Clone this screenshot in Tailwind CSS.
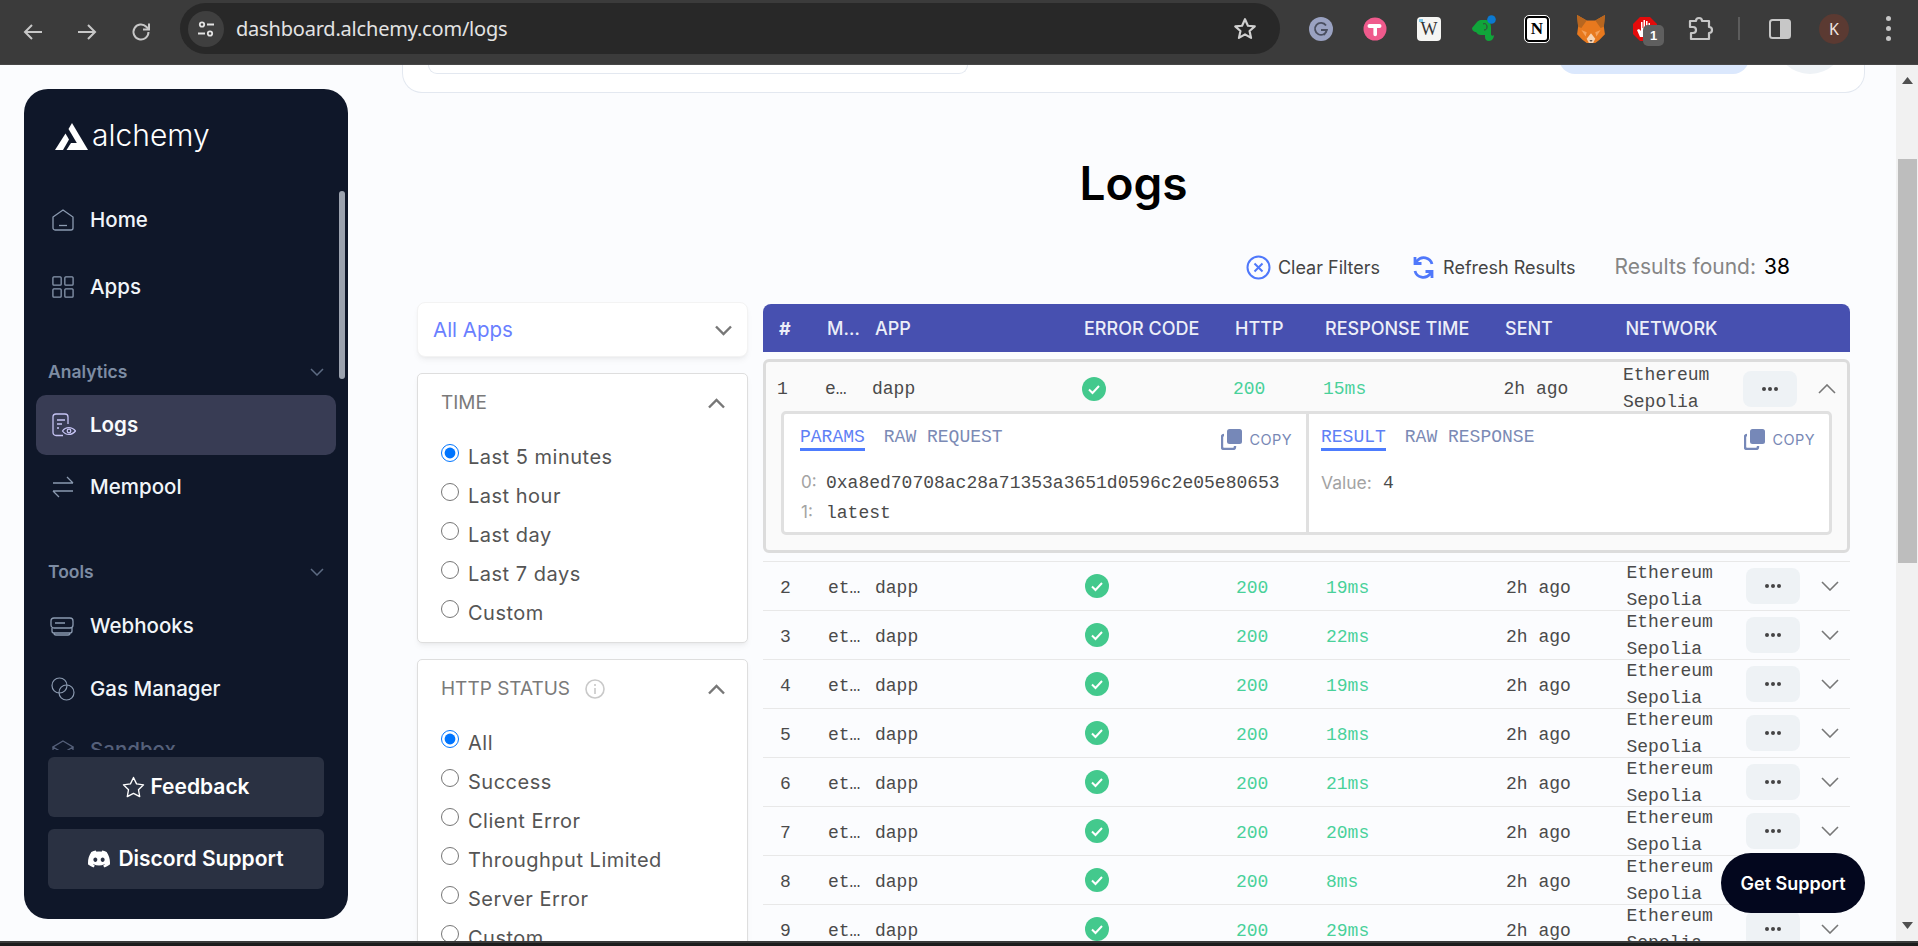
<!DOCTYPE html>
<html lang="en">
<head>
    <meta charset="UTF-8">
    <title>Logs - Alchemy</title>
    <script src="https://cdn.jsdelivr.net/npm/@tailwindcss/browser@4"></script>
</head>
<body class="h-[946px] overflow-hidden bg-[#fbfcfe] font-['Inter',sans-serif]">

    <!-- browser toolbar -->
    <div class="relative h-[65px] flex items-center bg-[#3b3b3b] border-b border-[#474747]">
        <div class="flex items-center w-[180px] pl-[21px] gap-[30px] text-[#c7c7c7]">
            <svg class="w-6 h-6" viewBox="0 0 24 24" fill="none" stroke="currentColor" stroke-width="2"><path d="M21 12H4M11 5l-7 7 7 7"/></svg>
            <svg class="w-6 h-6" viewBox="0 0 24 24" fill="none" stroke="currentColor" stroke-width="2"><path d="M3 12h17M13 5l7 7-7 7"/></svg>
            <svg class="w-6 h-6" viewBox="0 0 24 24" fill="none" stroke="currentColor" stroke-width="2"><path d="M19.5 12a7.5 7.5 0 1 1-2.2-5.3L20 9.5"/><path d="M20 3.5v6h-6" /></svg>
        </div>
        <div class="w-[1100px] h-[51px] -mt-[7px] rounded-full bg-[#282828] flex items-center pl-2 pr-[22px]">
            <div class="w-9 h-9 rounded-full bg-[#3f3f3f] flex items-center justify-center">
                <svg class="w-5 h-5" viewBox="0 0 20 20" fill="none" stroke="#e3e3e3" stroke-width="1.8"><circle cx="6" cy="5.5" r="2.2"/><path d="M11 5.5h7M2 14.5h7"/><circle cx="14" cy="14.5" r="2.2"/></svg>
            </div>
            <span class="ml-3 text-[20px] text-[#e3e3e3] font-['Noto_Sans',sans-serif] tracking-[-0.2px]">dashboard.alchemy.com/logs</span>
            <svg class="ml-auto w-[26px] h-[26px]" viewBox="0 0 24 24" fill="none" stroke="#d0d0d0" stroke-width="2" stroke-linejoin="round"><path d="M12 3l2.7 6 6.3.6-4.8 4.2 1.4 6.4L12 16.9l-5.6 3.3 1.4-6.4L3 9.600l6.300-.6z"/></svg>
        </div>
        <div class="flex items-center h-full -mt-[7px] ml-[29px]">
            <svg class="w-6 h-6" viewBox="0 0 24 24"><circle cx="12" cy="12" r="12" fill="#9aa2c2"/><path d="M17 8.500a6 6 0 1 0 .9 4.500H12M15 18l3-5" fill="none" stroke="#4a4f60" stroke-width="1.800"/></svg>
            <svg class="w-6 h-6 ml-[30px]" viewBox="0 0 24 24"><circle cx="12" cy="12" r="11.500" fill="#ef5a8c"/><path d="M6.500 7h10a1.500 1.500 0 0 1 0 4H14v6.500a1.800 1.800 0 0 1-3.600 0V11H6.500a2 2 0 0 1 0-4z" fill="#fff"/></svg>
            <div class="relative w-6 h-6 ml-[30px] rounded-[4px] bg-[#f5f5f3] flex items-center justify-center font-['Liberation_Serif',serif] text-[18px] leading-none text-[#333]">W<span class="absolute left-[2px] top-[2px] w-[4px] h-[3px] bg-[#7ec8e8]"></span></div>
            <svg class="w-7 h-7 ml-[28px]" viewBox="0 0 28 28"><path d="M3 13l5-6c1-1 2-2 4-2h5c4 0 5 4 5 8v6c0 2 2 2 3 1 0 3-2 6-5 6-3 0-4-2-4-4v-2h-4c-3 0-4-2-5-3H6c-2-1-3-2-3-4z" fill="#10a53a"/><path d="M14 9c2-1 4 0 4 3 0 2-1 3-3 3" stroke="#3b3b3b" stroke-width="1" fill="none"/><circle cx="22.500" cy="4.500" r="4.300" fill="#0b79d0"/></svg>
            <div class="w-6 h-[26px] ml-[28px] rounded-[4px] bg-white border-2 border-black outline-1 outline-white flex items-center justify-center font-['Liberation_Serif',serif] font-bold text-[17px] leading-none text-black">N</div>
            <svg class="w-[30px] h-[30px] ml-[27px]" viewBox="0 0 28 28"><path d="M1 1l9 5h8l9-5-1 11 1 7-5 5-4 3h-8l-4-3-5-5 1-7z" fill="#e8791e"/><path d="M1 1l9 5-5 7-3-1zM27 1l-9 5 5 7 3-1z" fill="#b8661f"/><path d="M5 15l5 2-1 4zM23 15l-5 2 1 4z" fill="#f5a25c"/><path d="M10 23l4-5 4 5-2 4h-4z" fill="#f6d3b3"/><path d="M12.500 24.500h3l-1.500 1.500z" fill="#333"/></svg>
            <div class="relative ml-[25px] w-7 h-7">
                <svg class="w-7 h-7" viewBox="0 0 28 28"><path d="M9 2h10l7 7v10l-7 7H9l-7-7V9z" fill="#e30b0b"/><path d="M9 22l-3-7 2-1 2 2V7h1.500v6h1V5h1.500v8h1V6h1.500v7h1V8h1.500v11l-2 3z" fill="#fff"/></svg>
                <span class="absolute left-[12px] top-[10px] w-[21px] h-[21px] rounded-[5px] bg-[#5f5f5f] text-white text-[13px] font-bold leading-[21px] text-center font-['Liberation_Sans',sans-serif]">1</span>
            </div>
            <svg class="w-[28px] h-[28px] ml-[27px]" viewBox="0 0 28 28" fill="none" stroke="#c7c7c7" stroke-width="2.200" stroke-linejoin="round"><path d="M4 6h6a3 3 0 0 1 6 0h7v6a3 3 0 0 1 0 6v6H5v-6h2a3 3 0 0 0 0-6H4z"/></svg>
            <div class="w-[2px] h-[23px] bg-[#5c5c5c] ml-[24px]"></div>
            <svg class="w-[24px] h-[24px] ml-[28px]" viewBox="0 0 24 24"><rect x="2" y="3" width="20" height="18" rx="2.500" fill="none" stroke="#c7c7c7" stroke-width="2"/><rect x="12" y="3" width="10" height="18" fill="#c7c7c7"/></svg>
            <div class="w-[30px] h-[30px] ml-[27px] rounded-full bg-[#5b3a32] text-[#f0e6e2] text-[16px] leading-[30px] text-center font-['Noto_Sans',sans-serif]">K</div>
            <div class="ml-[37px] flex flex-col gap-[5px]">
                <span class="w-[5px] h-[5px] rounded-full bg-[#c7c7c7]"></span>
                <span class="w-[5px] h-[5px] rounded-full bg-[#c7c7c7]"></span>
                <span class="w-[5px] h-[5px] rounded-full bg-[#c7c7c7]"></span>
            </div>
        </div>
    </div>

    <div class="relative h-[876px] overflow-hidden flex">
        <!-- sidebar -->
        <aside class="relative shrink-0 w-[324px] h-[830px] mt-[24px] ml-[24px] rounded-[24px] bg-[#0f1729] text-white">
            <div class="flex items-center h-[101px] pl-[31px] pb-[6px]">
                <svg class="w-[33px] h-[28px]" viewBox="0 0 33 28" fill="#fff"><path d="M17 0l16 27h-7L13.500 6z"/><path d="M10.500 10.500l3.500 6-6 10.500H0z"/><path d="M16 20h7.500l4 7H11.500z"/></svg>
                <span class="ml-[4px] text-[30px] leading-none font-light -mt-[3px]">alchemy</span>
            </div>

            <nav class="h-[560px] overflow-hidden">
                <a class="flex items-center h-[60px] pl-[28px] gap-[16px] text-[20.500px] font-medium text-[#f1f5f9]">
                    <svg class="w-[22px] h-[22px]" viewBox="0 0 22 22" fill="none" stroke="#8b9ab0" stroke-width="1.300"><path d="M1 8l10-7 10 7v11a2 2 0 0 1-2 2H3a2 2 0 0 1-2-2z"/><path d="M7 16.500h8"/></svg>
                    Home
                </a>
                <a class="flex items-center h-[60px] mt-[7px] pl-[28px] gap-[16px] text-[20.500px] font-medium text-[#f1f5f9]">
                    <svg class="w-[22px] h-[22px]" viewBox="0 0 24 24" fill="none" stroke="#8b9ab0" stroke-width="1.400"><rect x="1" y="1" width="9" height="9" rx="1"/><rect x="14" y="1" width="9" height="9" rx="1"/><rect x="1" y="14" width="9" height="9" rx="1"/><rect x="14" y="14" width="9" height="9" rx="1"/></svg>
                    Apps
                </a>
                <div class="flex items-center justify-between h-[24px] mt-[43px] pl-[24px] pr-[24px] text-[17.500px] font-semibold text-[#7d8ca3]">
                    Analytics
                    <svg class="w-[14px] h-[8px]" viewBox="0 0 14 8" fill="none" stroke="#5d6b82" stroke-width="1.500"><path d="M1 1l6 6 6-6"/></svg>
                </div>
                <a class="flex items-center h-[60px] mt-[11px] mx-[12px] pl-[16px] gap-[14px] rounded-[10px] bg-[#383c54] text-[20.500px] font-semibold text-[#f8fafc]">
                    <svg class="w-[24px] h-[24px]" viewBox="0 0 24 24" fill="none" stroke="#c5c3f3" stroke-width="1.300"><path d="M11 22.500H4a3 3 0 0 1-3-3V4a3 3 0 0 1 3-3h9a3 3 0 0 1 3 3v7"/><path d="M5 7h8M5 11h5M5 15h2"/><path d="M10.500 18c3-4.500 9.500-4.500 13 0-3.500 4.500-10 4.500-13 0z"/><circle cx="17" cy="18" r="1.800"/></svg>
                    Logs
                </a>
                <a class="flex items-center h-[60px] mt-[2px] pl-[28px] gap-[16px] text-[20.500px] font-medium text-[#f1f5f9]">
                    <svg class="w-[22px] h-[22px]" viewBox="0 0 22 22" fill="none" stroke="#8b9ab0" stroke-width="1.300"><path d="M1 7h20M15 1l6 6M21 15H1M7 21l-6-6"/></svg>
                    Mempool
                </a>
                <div class="flex items-center justify-between h-[24px] mt-[43px] pl-[24px] pr-[24px] text-[17.500px] font-semibold text-[#7d8ca3]">
                    Tools
                    <svg class="w-[14px] h-[8px]" viewBox="0 0 14 8" fill="none" stroke="#5d6b82" stroke-width="1.500"><path d="M1 1l6 6 6-6"/></svg>
                </div>
                <a class="flex items-center h-[60px] mt-[12px] pl-[26px] gap-[16px] text-[20.500px] font-medium text-[#f1f5f9]">
                    <svg class="w-[24px] h-[22px]" viewBox="0 0 24 22" fill="none" stroke="#8b9ab0" stroke-width="1.300"><rect x="1" y="3" width="22" height="10" rx="3"/><path d="M2 13v3a2 2 0 0 0 2 2h16a2 2 0 0 0 2-2v-3M4 18a2 2 0 0 0 2 2h12a2 2 0 0 0 2-2M5 8h10"/></svg>
                    Webhooks
                </a>
                <a class="flex items-center h-[60px] mt-[3px] pl-[28px] gap-[16px] text-[20.500px] font-medium text-[#f1f5f9]">
                    <svg class="w-[24px] h-[24px] -ml-[1px] -mr-[1px]" viewBox="0 0 24 24" fill="none" stroke="#8b9ab0" stroke-width="1.200"><circle cx="8.500" cy="8.500" r="7.500"/><circle cx="15.500" cy="15.500" r="7.500"/></svg>
                    Gas Manager
                </a>
                <a class="flex items-center h-[60px] mt-[1px] pl-[28px] gap-[16px] text-[20.500px] font-medium text-[#55607a]">
                    <svg class="w-[22px] h-[22px]" viewBox="0 0 22 22" fill="none" stroke="#55607a" stroke-width="1.300"><path d="M11 2l10 6-10 6L1 8zM1 8v8l10 5 10-5V8"/></svg>
                    Sandbox
                </a>
            </nav>

            <div class="mt-[7px] mx-[24px] flex flex-col gap-[12px]">
                <button class="flex items-center justify-center gap-[5px] h-[60px] rounded-[6px] bg-[#2a3142] text-[21px] font-semibold text-white">
                    <svg class="w-[23px] h-[22px]" viewBox="0 0 24 23" fill="none" stroke="#fff" stroke-width="1.400" stroke-linejoin="round"><path d="M12 1.500l3.200 6.700 7.300 1-5.300 5.100 1.300 7.300L12 18.100l-6.500 3.500 1.300-7.300L1.500 9.200l7.300-1z"/></svg>
                    Feedback
                </button>
                <button class="flex items-center justify-center gap-[8px] h-[60px] rounded-[6px] bg-[#2a3142] text-[21px] font-semibold text-white">
                    <svg class="w-[22px] h-[22px]" viewBox="0 0 24 24" fill="#fff"><path d="M20.317 4.3698a19.7913 19.7913 0 00-4.8851-1.5152.0741.0741 0 00-.0785.0371c-.211.3753-.4447.8648-.6083 1.2495-1.8447-.2762-3.68-.2762-5.4868 0-.1636-.3933-.4058-.8742-.6177-1.2495a.077.077 0 00-.0785-.037 19.7363 19.7363 0 00-4.8852 1.515.0699.0699 0 00-.0321.0277C.5334 9.0458-.319 13.5799.0992 18.0578a.0824.0824 0 00.0312.0561c2.0528 1.5076 4.0413 2.4228 5.9929 3.0294a.0777.0777 0 00.0842-.0276c.4616-.6304.8731-1.2952 1.226-1.9942a.076.076 0 00-.0416-.1057c-.6528-.2476-1.2743-.5495-1.8722-.8923a.077.077 0 01-.0076-.1277c.1258-.0943.2517-.1923.3718-.2914a.0743.0743 0 01.0776-.0105c3.9278 1.7933 8.18 1.7933 12.0614 0a.0739.0739 0 01.0785.0095c.1202.099.246.1981.3728.2924a.077.077 0 01-.0066.1276 12.2986 12.2986 0 01-1.873.8914.0766.0766 0 00-.0407.1067c.3604.698.7719 1.3628 1.225 1.9932a.076.076 0 00.0842.0286c1.961-.6067 3.9495-1.5219 6.0023-3.0294a.077.077 0 00.0313-.0552c.5004-5.177-.8382-9.6739-3.5485-13.6604a.061.061 0 00-.0312-.0286zM8.02 15.3312c-1.1825 0-2.1569-1.0857-2.1569-2.419 0-1.3332.9555-2.4189 2.157-2.4189 1.2108 0 2.1757 1.0952 2.1568 2.419 0 1.3332-.9555 2.4189-2.1569 2.4189zm7.9748 0c-1.1825 0-2.1569-1.0857-2.1569-2.419 0-1.3332.9554-2.4189 2.1569-2.4189 1.2108 0 2.1757 1.0952 2.1568 2.419 0 1.3332-.946 2.4189-2.1568 2.4189Z"/></svg>
                    Discord Support
                </button>
            </div>

            <div class="absolute top-[102px] right-[3px] w-[6px] h-[188px] rounded-full bg-[#9ca3af]"></div>
        </aside>

        <!-- main -->
        <main class="w-[1463px] ml-[54px] shrink-0">
            <div class="h-[28px] flex justify-between pl-[25px] pr-[30px] bg-white border border-t-0 border-[#e3e8f0] rounded-b-[20px]">
                <div class="w-[540px] h-[9px] bg-white border border-t-0 border-[#e3e8f0] rounded-b-[10px]"></div>
                <div class="flex gap-[37px] ml-auto">
                    <div class="w-[190px] h-[9px] overflow-hidden"><div class="h-[48px] -mt-[39px] rounded-[16px] bg-[#dbe8fd]"></div></div>
                    <div class="w-[48px] h-[9px] overflow-hidden"><div class="w-[70px] h-[70px] -ml-[11px] -mt-[61px] rounded-full bg-[#eef2f6]"></div></div>
                </div>
            </div>

            <div class="ml-[15px] w-[1433px]">
                <h1 class="mt-[60px] h-[60px] text-center text-[46px] leading-[60px] font-semibold text-black">Logs</h1>

                <div class="mt-[40px] h-[28px] flex items-center justify-end pr-[60px] text-[18px] text-[#444]">
                    <svg class="w-[25px] h-[25px]" viewBox="0 0 25 25" fill="none" stroke="#4f78fb" stroke-width="2"><circle cx="12.500" cy="12.500" r="11"/><path d="M8.500 8.500l8 8M16.500 8.500l-8 8"/></svg>
                    <span class="ml-[7px]">Clear Filters</span>
                    <svg class="ml-[33px] w-[21px] h-[25px]" viewBox="0 0 21 25" fill="none" stroke="#4f78fb" stroke-width="2.800"><path d="M19 9a8.500 8.500 0 0 0-15-3L2 8M2 2v6.500h6.500"/><path d="M2 16a8.500 8.500 0 0 0 15 3l2-2M19 23v-6.500h-6.500"/></svg>
                    <span class="ml-[9px]">Refresh Results</span>
                    <span class="ml-[39px] text-[21px] text-[#858585]">Results found:</span>
                    <span class="ml-[8px] text-[21px] text-black">38</span>
                </div>

                <div class="mt-[21px] flex gap-[15px] items-start">
                    <!-- filters -->
                    <div class="w-[331px] shrink-0">
                        <div class="h-[55px] flex items-center justify-between pl-[15px] pr-[15px] pt-[1px] bg-white rounded-[8px] border border-[#f3f3f3] shadow-md shadow-black/5">
                            <span class="text-[20.500px] text-[#6a7fff]">All Apps</span>
                            <svg class="w-[17px] h-[11px]" viewBox="0 0 17 11" fill="none" stroke="#777" stroke-width="2.400"><path d="M1 1.500l7.500 7.500L16 1.500"/></svg>
                        </div>

                        <div class="mt-[16px] h-[270px] bg-white border border-[#dedede] rounded-[5px] shadow-md shadow-black/5 pl-[23px] pr-[22px]">
                            <div class="flex items-center justify-between h-[30px] mt-[14px]">
                                <span class="text-[19px] text-[#7a7a7a]">TIME</span>
                                <svg class="w-[17px] h-[11px]" viewBox="0 0 17 11" fill="none" stroke="#777" stroke-width="2.400"><path d="M1 9.500L8.500 2 16 9.500"/></svg>
                            </div>
                            <div class="mt-[24px] flex flex-col gap-[9px] text-[20px] text-[#555] tracking-[0.5px]">
                                <label class="flex items-center gap-[9px] h-[30px]"><input type="radio" name="time" checked class="w-[18px] h-[18px] m-0 -mt-[8px]">Last 5 minutes</label>
                                <label class="flex items-center gap-[9px] h-[30px]"><input type="radio" name="time" class="w-[18px] h-[18px] m-0 -mt-[8px]">Last hour</label>
                                <label class="flex items-center gap-[9px] h-[30px]"><input type="radio" name="time" class="w-[18px] h-[18px] m-0 -mt-[8px]">Last day</label>
                                <label class="flex items-center gap-[9px] h-[30px]"><input type="radio" name="time" class="w-[18px] h-[18px] m-0 -mt-[8px]">Last 7 days</label>
                                <label class="flex items-center gap-[9px] h-[30px]"><input type="radio" name="time" class="w-[18px] h-[18px] m-0 -mt-[8px]">Custom</label>
                            </div>
                        </div>

                        <div class="mt-[16px] h-[320px] bg-white border border-[#dedede] rounded-[5px] shadow-md shadow-black/5 pl-[23px] pr-[22px]">
                            <div class="flex items-center h-[30px] mt-[14px]">
                                <span class="text-[19px] text-[#7a7a7a]">HTTP STATUS</span>
                                <svg class="ml-[15px] w-[20px] h-[20px]" viewBox="0 0 20 20" fill="none" stroke="#c9c9c9" stroke-width="1.600"><circle cx="10" cy="10" r="9"/><path d="M10 9v6M10 5v2"/></svg>
                                <svg class="ml-auto w-[17px] h-[11px]" viewBox="0 0 17 11" fill="none" stroke="#777" stroke-width="2.400"><path d="M1 9.500L8.500 2 16 9.500"/></svg>
                            </div>
                            <div class="mt-[24px] flex flex-col gap-[9px] text-[20px] text-[#555] tracking-[0.5px]">
                                <label class="flex items-center gap-[9px] h-[30px]"><input type="radio" name="status" checked class="w-[18px] h-[18px] m-0 -mt-[8px]">All</label>
                                <label class="flex items-center gap-[9px] h-[30px]"><input type="radio" name="status" class="w-[18px] h-[18px] m-0 -mt-[8px]">Success</label>
                                <label class="flex items-center gap-[9px] h-[30px]"><input type="radio" name="status" class="w-[18px] h-[18px] m-0 -mt-[8px]">Client Error</label>
                                <label class="flex items-center gap-[9px] h-[30px]"><input type="radio" name="status" class="w-[18px] h-[18px] m-0 -mt-[8px]">Throughput Limited</label>
                                <label class="flex items-center gap-[9px] h-[30px]"><input type="radio" name="status" class="w-[18px] h-[18px] m-0 -mt-[8px]">Server Error</label>
                                <label class="flex items-center gap-[9px] h-[30px]"><input type="radio" name="status" class="w-[18px] h-[18px] m-0 -mt-[8px]">Custom</label>
                            </div>
                        </div>
                    </div>

                    <!-- table -->
                    <div class="w-[1087px] mt-[2px] font-['Liberation_Mono',monospace] text-[18px] text-[#4a4a4a]">
                        <div class="grid grid-cols-[48px_48px_209px_151px_90px_180px_120.5px_119.5px] items-center h-[48px] pl-[16px] rounded-t-[8px] bg-[#4750b0] font-['Inter',sans-serif] text-[18px] font-medium text-[#eceef8]">
                            <span class="font-bold">#</span>
                            <span class="w-[32px] truncate">METHOD</span>
                            <span>APP</span>
                            <span>ERROR CODE</span>
                            <span>HTTP</span>
                            <span>RESPONSE TIME</span>
                            <span>SENT</span>
                            <span>NETWORK</span>
                        </div>

                        <!-- expanded row -->
                        <div class="mt-[7px] h-[194px] border-[3px] border-[#dcdcdc] rounded-[6px] bg-[#fafafa]">
                            <div class="grid grid-cols-[48px_47px_210px_151px_90px_120.5px_60px_119.5px_119.5px_54px_1fr] items-center h-[46px] mb-[3px] pl-[11px]">
                                <span>1</span>
                                <span class="w-[30px] truncate">eth_getTransactionCount</span>
                                <span>dapp</span>
                                <svg class="w-6 h-6" viewBox="0 0 24 24"><circle cx="12" cy="12" r="12" fill="#43c98d"/><path d="M7 12.500l3.500 3.500L17 9" fill="none" stroke="#fff" stroke-width="2"/></svg>
                                <span class="text-[#49d19a]">200</span>
                                <span class="col-span-2 text-[#49d19a]">15ms</span>
                                <span>2h ago</span>
                                <span class="leading-[27px]">Ethereum<br>Sepolia</span>
                                <div class="w-[54px] h-[36px] rounded-[8px] bg-[#eef2f5] flex items-center justify-center gap-[2px]">
                                    <span class="w-[4px] h-[4px] rounded-full bg-[#444]"></span><span class="w-[4px] h-[4px] rounded-full bg-[#444]"></span><span class="w-[4px] h-[4px] rounded-full bg-[#444]"></span>
                                </div>
                                <svg class="ml-[21px] w-[18px] h-[10px]" viewBox="0 0 18 10" fill="none" stroke="#777" stroke-width="1.600"><path d="M1 9l8-8 8 8"/></svg>
                            </div>
                            <div class="mx-[15px] h-[124px] grid grid-cols-[525px_1fr] border-[3px] border-[#e0e0e0] rounded-[5px] bg-white">
                                <div class="relative border-r-[3px] border-[#e0e0e0] pl-[16px] pt-[10px]">
                                    <div class="flex gap-[19px] h-[27px] text-[#7b8ab5]">
                                        <span class="h-[27px] border-b-[3px] border-[#4d7cfe] text-[#5f80f5]">PARAMS</span>
                                        <span>RAW REQUEST</span>
                                    </div>
                                    <div class="mt-[17px] flex items-center h-[30px]"><span class="w-[26px] pl-[1px] font-['Inter',sans-serif] text-[17px] text-[#a3a3a3]">0:</span><span>0xa8ed70708ac28a71353a3651d0596c2e05e80653</span></div>
                                    <div class="flex items-center h-[30px]"><span class="w-[26px] pl-[1px] font-['Inter',sans-serif] text-[17px] text-[#a3a3a3]">1:</span><span>latest</span></div>
                                    <div class="absolute right-[14px] top-[15px] flex items-center gap-[8px] font-['Inter',sans-serif] text-[14.500px] tracking-[0.4px] text-[#7888b5]">
                                        <svg class="w-[21px] h-[21px]" viewBox="0 0 21 21"><rect x="6" y="0" width="15" height="15" rx="2.500" fill="#7688b8"/><path d="M3 6a2 2 0 0 0-2 2v10a2 2 0 0 0 2 2h9a2 2 0 0 0 2-2v-1" fill="none" stroke="#7688b8" stroke-width="2.400"/></svg>
                                        COPY
                                    </div>
                                </div>
                                <div class="relative pl-[12px] pt-[10px]">
                                    <div class="flex gap-[19px] h-[27px] text-[#7b8ab5]">
                                        <span class="h-[27px] border-b-[3px] border-[#4d7cfe] text-[#5f80f5]">RESULT</span>
                                        <span>RAW RESPONSE</span>
                                    </div>
                                    <div class="mt-[17px] flex items-center h-[30px]"><span class="w-[62px] font-['Inter',sans-serif] text-[17.500px] text-[#a3a3a3]">Value:</span><span>4</span></div>
                                    <div class="absolute right-[14px] top-[15px] flex items-center gap-[8px] font-['Inter',sans-serif] text-[14.500px] tracking-[0.4px] text-[#7888b5]">
                                        <svg class="w-[21px] h-[21px]" viewBox="0 0 21 21"><rect x="6" y="0" width="15" height="15" rx="2.500" fill="#7688b8"/><path d="M3 6a2 2 0 0 0-2 2v10a2 2 0 0 0 2 2h9a2 2 0 0 0 2-2v-1" fill="none" stroke="#7688b8" stroke-width="2.400"/></svg>
                                        COPY
                                    </div>
                                </div>
                            </div>
                        </div>

                        <div id="rows" class="mt-[8px]"></div>
                    </div>
                </div>
            </div>
        </main>

        <!-- page scrollbar -->
        <div class="absolute right-0 top-0 bottom-0 w-[22px] bg-[#f1f1f1] flex flex-col items-center">
            <svg class="mt-[12px] w-[11px] h-[7px]" viewBox="0 0 11 7" fill="#505050"><path d="M5.500 0L11 7H0z"/></svg>
            <div class="mt-[75px] w-[19px] h-[404px] bg-[#bdbdbd]"></div>
            <svg class="mt-auto mb-[12px] w-[11px] h-[7px]" viewBox="0 0 11 7" fill="#505050"><path d="M5.500 7L11 0H0z"/></svg>
        </div>

        <button class="absolute left-[1721px] top-[788px] w-[144px] h-[60px] rounded-full bg-[#03071e] text-white text-[18px] font-semibold">Get Support</button>
    </div>

    <div class="h-[5px] bg-[#1c1c1c] border-t-2 border-[#3a3a3a]"></div>

    <script>
        const times = ['19ms', '22ms', '19ms', '18ms', '21ms', '20ms', '8ms', '29ms'];
        let html = '';
        times.forEach((t, i) => {
            html += `<div class="grid grid-cols-[48px_47px_210px_151px_90px_180px_120.5px_119.5px_54px_1fr] items-center h-[49px] pl-[17px] border-t border-[#e8e8e8]">
                <span class="pt-[4px]">${i + 2}</span>
                <span class="w-[38px] truncate pt-[4px]">eth_getTransactionCount</span>
                <span class="pt-[4px]">dapp</span>
                <svg class="w-6 h-6" viewBox="0 0 24 24"><circle cx="12" cy="12" r="12" fill="#43c98d"/><path d="M7 12.500l3.500 3.500L17 9" fill="none" stroke="#fff" stroke-width="2"/></svg>
                <span class="pt-[4px] text-[#49d19a]">200</span>
                <span class="pt-[4px] text-[#49d19a]">${t}</span>
                <span class="pt-[4px]">2h ago</span>
                <span class="leading-[27px] h-[48px] -mt-[5px]">Ethereum<br>Sepolia</span>
                <div class="w-[54px] h-[36px] rounded-[8px] bg-[#eef2f5] flex items-center justify-center gap-[2px]">
                    <span class="w-[4px] h-[4px] rounded-full bg-[#444]"></span><span class="w-[4px] h-[4px] rounded-full bg-[#444]"></span><span class="w-[4px] h-[4px] rounded-full bg-[#444]"></span>
                </div>
                <svg class="ml-[21px] w-[18px] h-[10px]" viewBox="0 0 18 10" fill="none" stroke="#777" stroke-width="1.600"><path d="M1 1l8 8 8-8"/></svg>
            </div>`;
        });
        document.getElementById('rows').innerHTML = html;
    </script>
</body>
</html>
